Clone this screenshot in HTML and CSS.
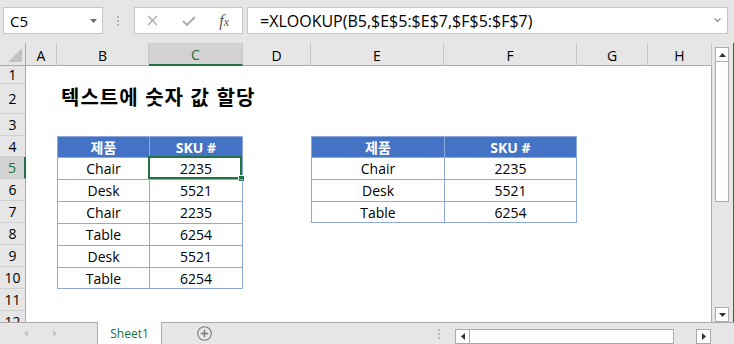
FILE: index.html
```html
<!DOCTYPE html>
<html lang="ko">
<head>
  <meta charset="UTF-8">
  <title>텍스트에 숫자 값 할당</title>
  <link rel="stylesheet" href="styles.css">
</head>
<body>

  <div class="toolbar">
    <div class="namebox">
      <span>C5</span>
      <svg width="7" height="4" viewBox="0 0 7 4"><path d="M0 0h7L3.5 4z" fill="#6a6a6a"/></svg>
    </div>
    <div class="grip"><i></i><i></i><i></i></div>
    <div class="fxbox">
      <span class="fxbtn"><svg width="11" height="11" viewBox="0 0 11 11"><path d="M1 1l9 9M10 1l-9 9" stroke="#a9a9a9" stroke-width="1.3" fill="none"/></svg></span>
      <span class="fxbtn"><svg width="14" height="10" viewBox="0 0 14 10"><path d="M1 5l4 4 8-8" stroke="#a9a9a9" stroke-width="1.8" fill="none"/></svg></span>
      <span class="fxbtn fx"><i>f</i><i class="sub">x</i></span>
    </div>
    <div class="formula">
      <span>=XLOOKUP(B5,$E$5:$E$7,$F$5:$F$7)</span>
      <svg width="7" height="5" viewBox="0 0 7 5"><path d="M0.5 0.5l3 3 3-3" stroke="#888" stroke-width="1.2" fill="none"/></svg>
    </div>
  </div>

  <div class="main">
    <div class="sheet">
      <!-- column headers -->
      <div class="corner"><svg width="14" height="14" viewBox="0 0 14 14"><path d="M14 0V14H0z" fill="#c2c2c2"/></svg></div>
      <div class="ch">A</div><div class="ch">B</div><div class="ch sel">C</div><div class="ch">D</div>
      <div class="ch">E</div><div class="ch">F</div><div class="ch">G</div><div class="ch">H</div>

      <!-- row 1 -->
      <div class="rh">1</div><div></div><div></div><div></div><div></div><div></div><div></div><div></div><div></div>

      <!-- row 2 -->
      <div class="rh">2</div><div></div>
      <div class="title">텍스트에 숫자 값 할당</div>
      <div></div><div></div><div></div><div></div>

      <!-- row 3 -->
      <div class="rh">3</div><div></div><div></div><div></div><div></div><div></div><div></div><div></div><div></div>

      <!-- row 4 -->
      <div class="rh">4</div><div></div>
      <div class="t h">제품</div><div class="t h r">SKU #</div>
      <div></div>
      <div class="t h">제품</div><div class="t h r">SKU #</div>
      <div></div><div></div>

      <!-- row 5 -->
      <div class="rh sel">5</div><div></div>
      <div class="t">Chair</div><div class="t r active">2235<span class="cursor"><i></i></span></div>
      <div></div>
      <div class="t">Chair</div><div class="t r">2235</div>
      <div></div><div></div>

      <!-- row 6 -->
      <div class="rh">6</div><div></div>
      <div class="t">Desk</div><div class="t r">5521</div>
      <div></div>
      <div class="t">Desk</div><div class="t r">5521</div>
      <div></div><div></div>

      <!-- row 7 -->
      <div class="rh">7</div><div></div>
      <div class="t">Chair</div><div class="t r">2235</div>
      <div></div>
      <div class="t b">Table</div><div class="t r b">6254</div>
      <div></div><div></div>

      <!-- row 8 -->
      <div class="rh">8</div><div></div>
      <div class="t">Table</div><div class="t r">6254</div>
      <div></div><div></div><div></div><div></div><div></div>

      <!-- row 9 -->
      <div class="rh">9</div><div></div>
      <div class="t">Desk</div><div class="t r">5521</div>
      <div></div><div></div><div></div><div></div><div></div>

      <!-- row 10 -->
      <div class="rh">10</div><div></div>
      <div class="t b">Table</div><div class="t r b">6254</div>
      <div></div><div></div><div></div><div></div><div></div>

      <!-- row 11, 12 -->
      <div class="rh">11</div><div></div><div></div><div></div><div></div><div></div><div></div><div></div><div></div>
      <div class="rh">12</div><div></div><div></div><div></div><div></div><div></div><div></div><div></div><div></div>
    </div>

    <div class="vscroll">
      <div class="sbtn"><svg width="7" height="4" viewBox="0 0 7 4"><path d="M3.5 0L7 4H0z" fill="#333"/></svg></div>
      <div class="vthumb"></div>
      <div class="track"></div>
      <div class="sbtn"><svg width="7" height="4" viewBox="0 0 7 4"><path d="M0 0h7L3.5 4z" fill="#333"/></svg></div>
    </div>
  </div>

  <div class="tabbar">
    <div class="tabnav">
      <svg width="4" height="7" viewBox="0 0 4 7"><path d="M4 0V7L0 3.5z" fill="#c4c4c4"/></svg>
      <svg width="4" height="7" viewBox="0 0 4 7"><path d="M0 0V7L4 3.5z" fill="#c4c4c4"/></svg>
    </div>
    <div class="tab">Sheet1</div>
    <div class="addsheet">
      <svg width="15" height="15" viewBox="0 0 15 15"><circle cx="7.5" cy="7.5" r="6.8" fill="none" stroke="#7a7a7a" stroke-width="1.1"/><path d="M7.5 3.8v7.4M3.8 7.5h7.4" stroke="#7a7a7a" stroke-width="1.4"/></svg>
    </div>
    <div class="hdots"><i></i><i></i><i></i></div>
    <div class="hscroll">
      <div class="sbtn"><svg width="4" height="7" viewBox="0 0 4 7"><path d="M4 0V7L0 3.5z" fill="#333"/></svg></div>
      <div class="hthumb"></div>
      <div class="track"></div>
      <div class="sbtn"><svg width="4" height="7" viewBox="0 0 4 7"><path d="M0 0V7L4 3.5z" fill="#333"/></svg></div>
    </div>
  </div>

</body>
</html>
```

FILE: styles.css
```css
* {
  box-sizing: border-box;
}

body {
  margin: 0;
  width: 734px;
  height: 344px;
  overflow: hidden;
  background-color: #e6e6e6;
  font-family: "Open Sans", "Noto Sans CJK KR", sans-serif;
  font-size: 14px;
  color: #000;
}

/* formula bar */
.toolbar {
  display: flex;
  align-items: flex-start;
  height: 43px;
  padding: 7px 0 0 3px;
}

.namebox {
  width: 100px;
  height: 27px;
  background: #fff;
  border: 1px solid #c6c6c6;
  display: flex;
  align-items: center;
  justify-content: space-between;
  padding: 0 5px 0 6px;
  font-size: 15px;
}

.grip {
  margin-left: 13px;
  width: 4px;
  height: 27px;
  display: flex;
  flex-direction: column;
  align-items: center;
  justify-content: center;
  gap: 2px;
}

.grip i, .hdots i {
  display: block;
  width: 2px;
  height: 2px;
  background: #b4b4b4;
}

.fxbox {
  margin-left: 14px;
  width: 109px;
  height: 27px;
  background: #fff;
  border: 1px solid #c6c6c6;
  display: flex;
}

.fxbtn {
  flex: 1;
  display: flex;
  align-items: center;
  justify-content: center;
}

.fx {
  font-family: "Liberation Serif", serif;
  font-size: 16px;
  color: #555;
}

.fx .sub {
  font-size: 12px;
  margin-top: 3px;
}

.formula {
  margin-left: 4px;
  width: 481px;
  height: 27px;
  background: #fff;
  border: 1px solid #c6c6c6;
  display: flex;
  align-items: center;
  justify-content: space-between;
  padding: 0 6px 0 12px;
  font-size: 16px;
}

/* worksheet */
.main {
  display: flex;
  height: 279px;
}

.sheet {
  width: 712px;
  display: grid;
  grid-template-columns: 26px 31px 92px 94px 68px 133px 133px 71px 64px;
  grid-template-rows: 23px 18px 30px 22px 21px repeat(8, 22px);
  overflow: hidden;
  background: #fff;
  box-shadow: inset -1px 0 #ababab;
}

.corner {
  background: #e6e6e6;
  border-right: 1px solid #ababab;
  border-bottom: 1px solid #ababab;
  display: flex;
  align-items: flex-end;
  justify-content: flex-end;
  padding: 0 3px 3px 0;
}

.ch {
  background: #e6e6e6;
  border-right: 1px solid #c6c6c6;
  border-bottom: 1px solid #ababab;
  display: flex;
  align-items: center;
  justify-content: center;
  padding-top: 2px;
}

.ch.sel {
  background: #d2d2d2;
  color: #217346;
  border-bottom: 2px solid #217346;
}

.rh {
  background: #e6e6e6;
  border-right: 1px solid #ababab;
  border-bottom: 1px solid #d0d0d0;
  display: flex;
  align-items: center;
  justify-content: center;
}

.rh.sel {
  background: #d2d2d2;
  color: #217346;
  border-right: 2px solid #217346;
}

.title {
  grid-column: span 3;
  font-family: "Noto Sans CJK KR", sans-serif;
  font-weight: bold;
  font-size: 20px;
  letter-spacing: 1px;
  display: flex;
  align-items: center;
  padding: 0 0 5px 4px;
  white-space: nowrap;
}

.t {
  border-top: 1px solid #8ea9db;
  border-left: 1px solid #8ea9db;
  display: flex;
  align-items: center;
  justify-content: center;
  position: relative;
}

.t.r {
  border-right: 1px solid #8ea9db;
}

.t.b {
  border-bottom: 1px solid #8ea9db;
}

.t.h {
  background: #4472c4;
  color: #fff;
  font-weight: bold;
}

.cursor {
  position: absolute;
  left: -2px;
  top: -2px;
  width: 94px;
  height: 23px;
  border: 2px solid #217346;
}

.cursor i {
  position: absolute;
  right: -5px;
  bottom: -5px;
  width: 7px;
  height: 7px;
  background: #217346;
  border: 1px solid #fff;
}

/* scrollbars */
.vscroll {
  width: 22px;
  padding: 4px 4px 0 3px;
  border-right: 1px solid #217346;
  display: flex;
  flex-direction: column;
}

.sbtn {
  width: 14px;
  height: 15px;
  background: #fff;
  border: 1px solid #ababab;
  display: flex;
  align-items: center;
  justify-content: center;
  flex: none;
}

.vthumb {
  height: 141px;
  margin-top: -1px;
  background: #fff;
  border: 1px solid #ababab;
}

.track {
  flex: 1;
}

/* sheet tabs */
.tabbar {
  display: flex;
  align-items: flex-start;
  height: 22px;
  border-top: 1px solid #ababab;
}

.tabnav {
  width: 97px;
  height: 21px;
  display: flex;
  align-items: center;
  gap: 25px;
  padding-left: 24px;
}

.tab {
  width: 65px;
  height: 22px;
  margin-top: -1px;
  background: #fff;
  border-left: 1px solid #ababab;
  border-right: 1px solid #ababab;
  color: #217346;
  font-size: 12px;
  display: flex;
  align-items: center;
  justify-content: center;
  padding-top: 1px;
}

.addsheet {
  margin-left: 35px;
  height: 21px;
  display: flex;
  align-items: center;
}

.hdots {
  margin-left: 226px;
  height: 21px;
  display: flex;
  flex-direction: column;
  justify-content: center;
  gap: 2px;
}

.hscroll {
  margin: 6px 0 0 15px;
  width: 256px;
  height: 15px;
  display: flex;
}

.hscroll .sbtn {
  width: 15px;
}

.hthumb {
  width: 205px;
  margin-left: -1px;
  background: #fff;
  border: 1px solid #ababab;
}
```
